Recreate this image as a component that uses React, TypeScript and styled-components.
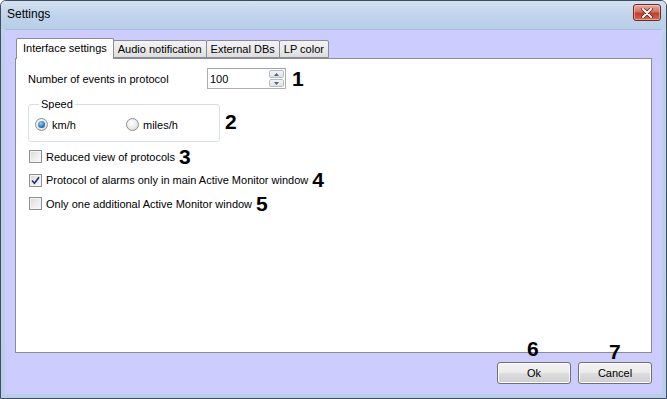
import { createGlobalStyle, styled } from "styled-components";

const GlobalStyle = createGlobalStyle`
  html, body {
    margin: 0;
    padding: 0;
    background: #ffffff;
  }
  body {
    font-family: "Liberation Sans", Arial, sans-serif;
    font-size: 11px;
    color: #000;
  }
`;

const Window = styled.div`
  width: 667px;
  height: 399px;
  box-sizing: border-box;
  display: flex;
  flex-direction: column;
  border: 1px solid #3e4d5f;
  border-radius: 6px 6px 0 0;
  background: linear-gradient(to bottom, #c9dbee 0%, #bcd1e9 10%, #b9cfe8 100%);
  overflow: hidden;
`;

const TitleBar = styled.div`
  height: 28px;
  display: flex;
  align-items: center;
  justify-content: space-between;
  padding: 0 5px 0 6px;
  background: linear-gradient(to bottom, #d4e2f1 0%, #c0d4eb 50%, #b8cee8 100%);
`;

const Title = styled.div`
  font-family: "Liberation Sans", Arial, sans-serif;
  font-size: 12px;
  color: #000;
  margin-top: -3px;
`;

const CloseButton = styled.div`
  width: 28px;
  height: 17px;
  margin-top: -5px;
  box-sizing: border-box;
  border: 1px solid #6d2a20;
  border-radius: 3px;
  background: linear-gradient(to bottom, #e8aea4 0%, #d4705f 45%, #c23f28 55%, #d46a52 100%);
  display: flex;
  align-items: center;
  justify-content: center;
  box-shadow: inset 0 0 0 1px rgba(255, 220, 210, 0.5);
`;

const Frame = styled.div`
  flex: 1;
  display: flex;
  padding: 0 4px 4px 4px;
`;

const Client = styled.div`
  flex: 1;
  display: flex;
  flex-direction: column;
  background: #ccccff;
  padding: 8px 10px 10px 10px;
  border-top: 1px solid #a9bdd6;
`;

const TabStrip = styled.div`
  display: flex;
  align-items: flex-end;
  height: 20px;
  padding-left: 1px;
  position: relative;
  z-index: 1;
`;

const Tab = styled.div<{ $active?: boolean }>`
  box-sizing: border-box;
  height: ${(p) => (p.$active ? "21px" : "18px")};
  margin-bottom: ${(p) => (p.$active ? "-1px" : "0")};
  margin-left: ${(p) => (p.$active ? "0" : "-1px")};
  padding: 0 ${(p) => (p.$active ? "6px" : "4px")};
  display: flex;
  align-items: center;
  border: 1px solid #898c95;
  border-bottom: ${(p) => (p.$active ? "none" : "1px solid #898c95")};
  border-radius: 2px 2px 0 0;
  background: ${(p) =>
    p.$active ? "#ffffff" : "linear-gradient(to bottom, #f2f2f2 0%, #ebebeb 50%, #dddddd 100%)"};
  padding-bottom: ${(p) => (p.$active ? "2px" : "0")};
  white-space: nowrap;
`;

const Panel = styled.div`
  flex: 1;
  background: #ffffff;
  border: 1px solid #898c95;
  padding: 9px 12px;
  display: flex;
  flex-direction: column;
  align-items: flex-start;
`;

const Row = styled.div`
  display: flex;
  align-items: center;
`;

const FieldLabel = styled.div`
  width: 179px;
`;

const Spin = styled.div`
  width: 79px;
  height: 21px;
  box-sizing: border-box;
  border: 1px solid #abadb3;
  border-top-color: #a0a5ad;
  display: flex;
  align-items: stretch;
  background: #fff;
`;

const SpinValue = styled.div`
  flex: 1;
  padding-left: 2px;
  display: flex;
  align-items: center;
`;

const SpinButtons = styled.div`
  width: 15px;
  display: flex;
  flex-direction: column;
  padding: 1px 1px 1px 0;
  gap: 1px;
`;

const SpinArrow = styled.div`
  flex: 1;
  box-sizing: border-box;
  border: 1px solid #b6bcc6;
  border-radius: 2px;
  background: linear-gradient(to bottom, #f4f4f4, #dfe3e8);
  display: flex;
  align-items: center;
  justify-content: center;
`;

const Mark = styled.span<{ $gap?: number; $drop?: number }>`
  font-family: "Liberation Sans", Arial, sans-serif;
  font-weight: bold;
  font-size: 21px;
  line-height: 18px;
  margin-left: ${(p) => p.$gap ?? 5}px;
  margin-top: ${(p) => p.$drop ?? 0}px;
`;

const Group = styled.fieldset`
  margin: 9px 0 0 0;
  width: 192px;
  box-sizing: border-box;
  border: 1px solid #d5dfe5;
  border-radius: 3px;
  padding: 8px 6px 10px 6px;
  display: flex;
  gap: 0;
`;

const Legend = styled.legend`
  padding: 0 2px;
  margin-left: 4px;
  font-size: 11px;
`;

const RadioItem = styled.label<{ $width?: number }>`
  display: flex;
  align-items: center;
  gap: 4px;
  width: ${(p) => p.$width ?? 90}px;
`;

const RadioCircle = styled.span<{ $on?: boolean }>`
  width: 13px;
  height: 13px;
  box-sizing: border-box;
  border-radius: 50%;
  border: 1px solid #8e8f8f;
  background: radial-gradient(circle at 40% 35%, #ffffff 0%, #e9e9e9 55%, #cfcfcf 100%);
  display: flex;
  align-items: center;
  justify-content: center;
  &::after {
    content: "";
    display: ${(p) => (p.$on ? "block" : "none")};
    width: 7px;
    height: 7px;
    border-radius: 50%;
    background: radial-gradient(circle at 40% 35%, #8fd3ff 0%, #2a7cc0 55%, #13467a 100%);
  }
`;

const Checks = styled.div`
  margin-top: 3px;
  display: flex;
  flex-direction: column;
`;

const CheckRow = styled.div`
  display: flex;
  align-items: center;
  height: 23.5px;
`;

const CheckBox = styled.span`
  width: 13px;
  height: 13px;
  box-sizing: border-box;
  margin-left: 1px;
  margin-right: 4px;
  border: 1px solid #8e8f8f;
  background: linear-gradient(135deg, #d8d8d8 0%, #ececec 50%, #f8f8f8 100%);
  box-shadow: inset 0 0 0 1px #f4f4f4;
  display: flex;
  align-items: center;
  justify-content: center;
`;

const Footer = styled.div`
  display: flex;
  justify-content: flex-end;
  gap: 7px;
  padding-top: 9px;
`;

const Button = styled.div`
  position: relative;
  width: 74px;
  height: 22px;
  box-sizing: border-box;
  border: 1px solid #707070;
  border-radius: 3px;
  background: linear-gradient(to bottom, #f2f2f2 0%, #ebebeb 49%, #dddddd 50%, #cfcfcf 100%);
  box-shadow: inset 0 0 0 1px #fbfbfb;
  display: flex;
  align-items: center;
  justify-content: center;
`;

const ButtonMark = styled.span<{ $top: number; $left: number }>`
  position: absolute;
  top: ${(p) => p.$top}px;
  left: ${(p) => p.$left}px;
  font-family: "Liberation Sans", Arial, sans-serif;
  font-weight: bold;
  font-size: 21px;
  line-height: 18px;
`;

function Check({ checked, label, mark }: { checked?: boolean; label: string; mark: string }) {
  return (
    <CheckRow>
      <CheckBox>
        {checked && (
          <svg width="9" height="9" viewBox="0 0 9 9">
            <path d="M1 4.5 L3.5 7.2 L8 1.2" fill="none" stroke="#1c2e7a" strokeWidth="1.6" />
          </svg>
        )}
      </CheckBox>
      <span>{label}</span>
      <Mark $gap={4}>{mark}</Mark>
    </CheckRow>
  );
}

export default function App() {
  return (
    <>
      <GlobalStyle />
      <Window>
        <TitleBar>
          <Title>Settings</Title>
          <CloseButton>
            <svg width="12" height="10" viewBox="0 0 12 10">
              <path d="M2 1 L10 9 M10 1 L2 9" stroke="#5a1d14" strokeWidth="3.4" strokeLinecap="round" />
              <path d="M2 1 L10 9 M10 1 L2 9" stroke="#ffffff" strokeWidth="2" strokeLinecap="round" />
            </svg>
          </CloseButton>
        </TitleBar>
        <Frame>
          <Client>
            <TabStrip>
              <Tab $active>Interface settings</Tab>
              <Tab>Audio notification</Tab>
              <Tab>External DBs</Tab>
              <Tab>LP color</Tab>
            </TabStrip>
            <Panel>
              <Row>
                <FieldLabel>Number of events in protocol</FieldLabel>
                <Spin>
                  <SpinValue>100</SpinValue>
                  <SpinButtons>
                    <SpinArrow>
                      <svg width="5" height="3" viewBox="0 0 5 3">
                        <path d="M0 3 L2.5 0 L5 3 Z" fill="#4d6185" />
                      </svg>
                    </SpinArrow>
                    <SpinArrow>
                      <svg width="5" height="3" viewBox="0 0 5 3">
                        <path d="M0 0 L2.5 3 L5 0 Z" fill="#4d6185" />
                      </svg>
                    </SpinArrow>
                  </SpinButtons>
                </Spin>
                <Mark $gap={6}>1</Mark>
              </Row>
              <Row>
                <Group>
                  <Legend>Speed</Legend>
                  <RadioItem $width={91}>
                    <RadioCircle $on />
                    km/h
                  </RadioItem>
                  <RadioItem $width={80}>
                    <RadioCircle />
                    miles/h
                  </RadioItem>
                </Group>
                <Mark $gap={5} $drop={12}>
                  2
                </Mark>
              </Row>
              <Checks>
                <Check label="Reduced view of protocols" mark="3" />
                <Check checked label="Protocol of alarms only in main Active Monitor window" mark="4" />
                <Check label="Only one additional Active Monitor window" mark="5" />
              </Checks>
            </Panel>
            <Footer>
              <Button>
                <ButtonMark $top={-23} $left={29}>6</ButtonMark>
                Ok
              </Button>
              <Button>
                <ButtonMark $top={-20} $left={30}>7</ButtonMark>
                Cancel
              </Button>
            </Footer>
          </Client>
        </Frame>
      </Window>
    </>
  );
}
